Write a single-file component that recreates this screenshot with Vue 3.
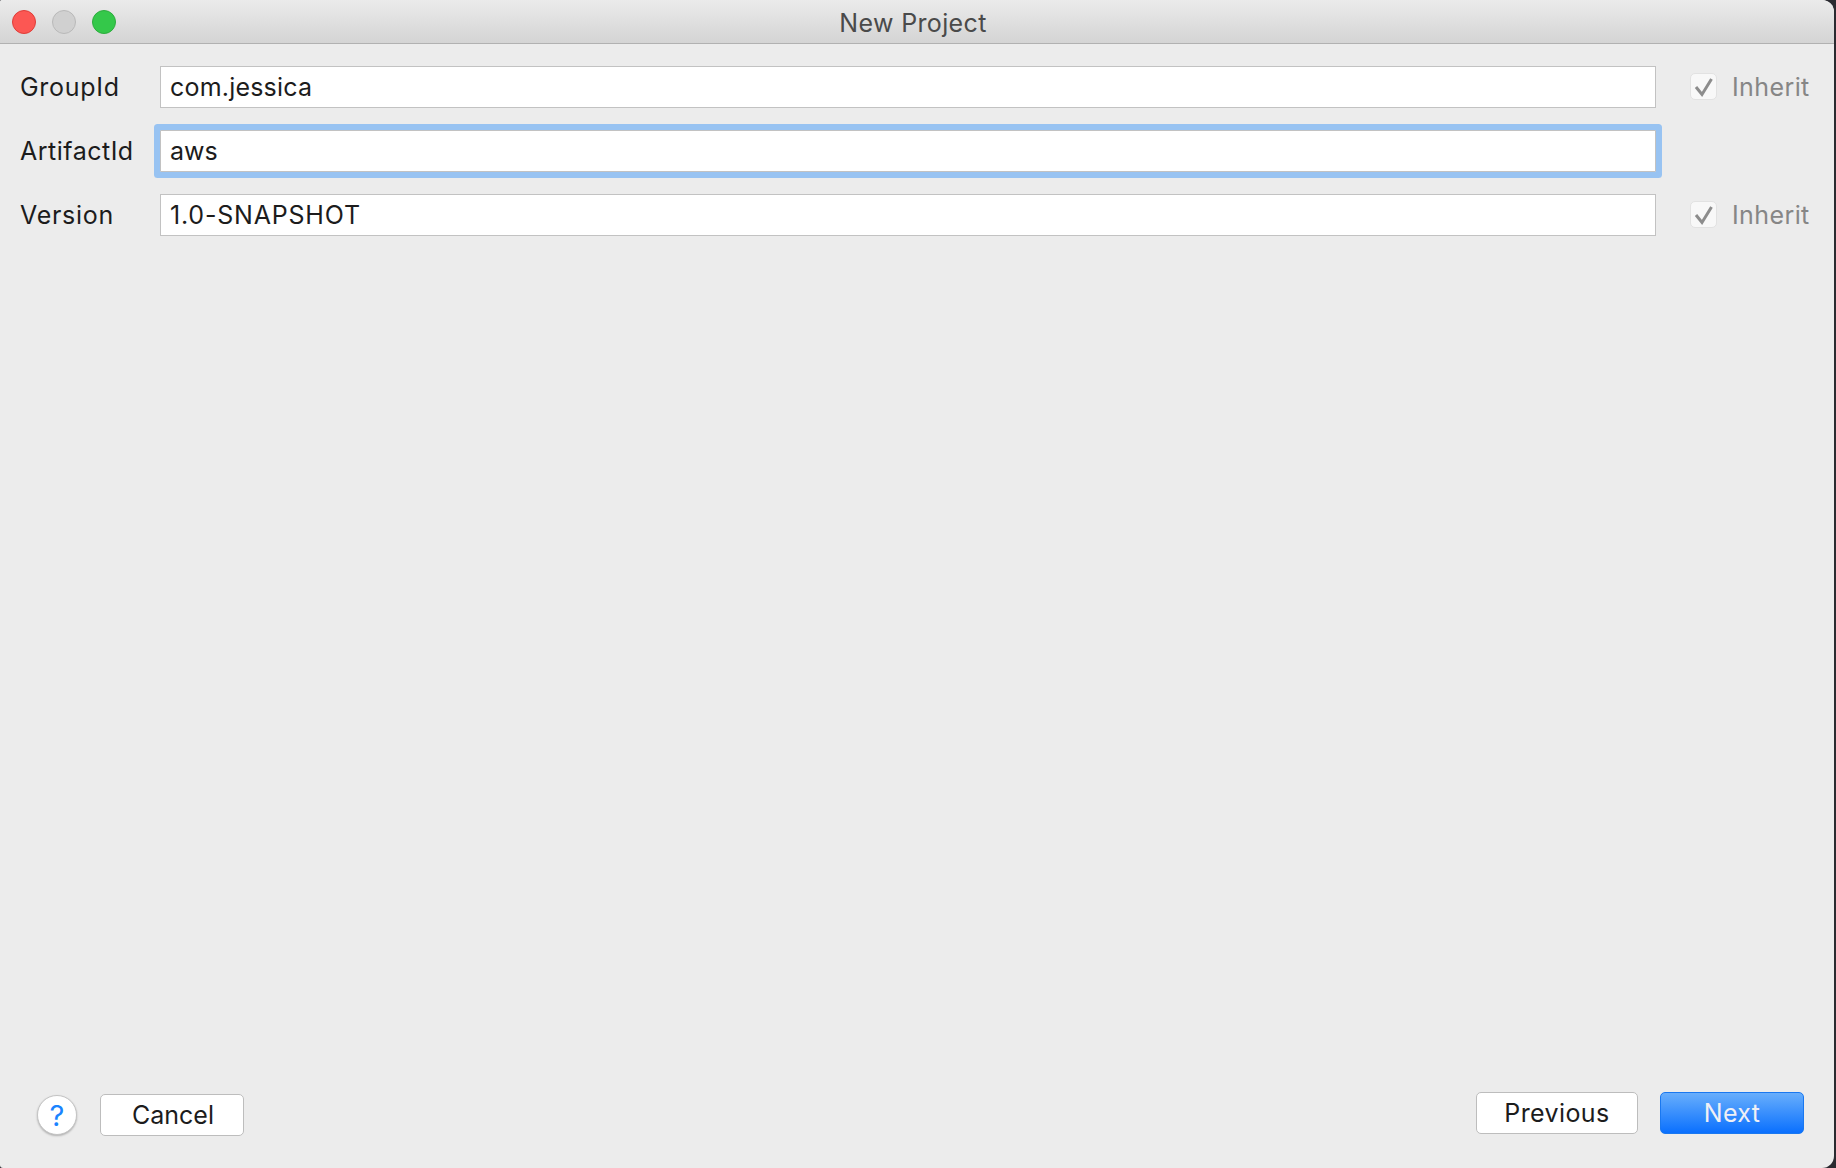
<script setup>
const rows = [
  { label: 'GroupId', value: 'com.jessica', inherit: true, cls: 'v-group', labelCls: '' },
  { label: 'ArtifactId', value: 'aws', inherit: false, focus: true, cls: 'v-artifact', labelCls: 'tight' },
  { label: 'Version', value: '1.0-SNAPSHOT', inherit: true, cls: 'v-version', labelCls: '' },
]
</script>

<template>
  <div class="screen">
    <div class="window">
      <header class="titlebar">
        <div class="lights">
          <span class="light red"></span>
          <span class="light gray"></span>
          <span class="light green"></span>
        </div>
        <div class="title">New Project</div>
      </header>
      <main class="form">
        <div v-for="r in rows" :key="r.label" class="row">
          <label class="label" :class="r.labelCls">{{ r.label }}</label>
          <div class="input" :class="[r.cls, { focus: r.focus }]">{{ r.value }}</div>
          <div class="inherit">
            <template v-if="r.inherit">
              <span class="check">
                <svg width="27" height="27" viewBox="0 0 27 27">
                  <path d="M6 14 L12 21.5 L21.5 6" fill="none" stroke="#8c8c8c" stroke-width="3" />
                </svg>
              </span>
              <span class="inherit-text">Inherit</span>
            </template>
          </div>
        </div>
      </main>
      <footer class="footer">
        <div class="left">
          <button class="help">?</button>
          <button class="btn cancel">Cancel</button>
        </div>
        <div class="right">
          <button class="btn prev">Previous</button>
          <button class="btn next">Next</button>
        </div>
      </footer>
    </div>
  </div>
</template>

<style>
html, body { margin: 0; background: #000; }
</style>

<style scoped>
.screen {
  width: 1836px;
  height: 1168px;
  background: #2a2a30;
  font-family: Inter, "Liberation Sans", sans-serif;
  overflow: hidden;
}
.window {
  width: 1834px;
  height: 1168px;
  background: #ececec;
  border-radius: 2px 12px 12px 3px;
  display: flex;
  flex-direction: column;
  overflow: hidden;
}
.titlebar {
  height: 43px;
  flex: none;
  position: relative;
  background: linear-gradient(#ebebeb, #d4d4d4);
  border-bottom: 1px solid #b1b1b1;
  display: flex;
  align-items: center;
  justify-content: center;
}
.lights {
  position: absolute;
  left: 12px;
  top: 10px;
  display: flex;
  gap: 16px;
}
.light {
  width: 24px;
  height: 24px;
  border-radius: 50%;
  box-sizing: border-box;
}
.red { background: #fc5753; border: 1px solid #df3d38; }
.gray { background: #d0d0d0; border: 1px solid #b9b9b9; }
.green { background: #34c84a; border: 1px solid #2dac3e; }
.title {
  font-size: 25px;
  letter-spacing: 0.35px;
  color: #4a4a4a;
  padding: 2px 8px 0 0;
}
.form {
  flex: 1;
  padding: 22px 0 0 20px;
  display: flex;
  flex-direction: column;
  gap: 22px;
}
.row {
  display: flex;
  align-items: center;
  height: 42px;
}
.label {
  width: 140px;
  font-size: 25px;
  letter-spacing: 0.7px;
  color: #1c1c1c;
}
.label.tight { letter-spacing: 0.5px; }
.input {
  width: 1496px;
  height: 42px;
  box-sizing: border-box;
  background: #fff;
  border: 1.5px solid #c2c2c2;
  padding-left: 9px;
  font-size: 25px;
  line-height: 41px;
  color: #1c1c1c;
}
.v-group { letter-spacing: 0.2px; }
.v-artifact { letter-spacing: 0; }
.v-version { letter-spacing: 0.8px; }
.input.focus {
  box-shadow: 0 0 0 6px #98c3f2;
  border-radius: 1px;
}
.inherit {
  display: flex;
  align-items: center;
  margin-left: 34px;
}
.check {
  width: 27px;
  height: 27px;
  margin-bottom: 2px;
  box-sizing: border-box;
  background: #f8f8f8;
  border: 1px solid #e2e2e2;
  border-radius: 5px;
  display: flex;
  align-items: center;
  justify-content: center;
}
.check svg {
  flex: none;
}
.inherit-text {
  margin-left: 15px;
  font-size: 25px;
  letter-spacing: 0.4px;
  color: #868686;
}
.footer {
  height: 76px;
  flex: none;
  display: flex;
  justify-content: space-between;
  padding: 0 30px 0 37px;
}
.left, .right {
  display: flex;
  align-items: flex-start;
}
.left { padding-top: 2px; gap: 23px; }
.right { gap: 22px; }
.help {
  width: 40px;
  height: 40px;
  margin-top: 1px;
  border-radius: 50%;
  background: #fff;
  border: 1px solid #c4c4c4;
  box-shadow: 0 1px 2px rgba(0,0,0,.25);
  color: #1a84ff;
  font-family: inherit;
  font-size: 29px;
  font-weight: 400;
  padding: 0;
}
.btn {
  height: 42px;
  box-sizing: border-box;
  border-radius: 5px;
  background: #fff;
  border: 1px solid #bdbdbd;
  font-family: inherit;
  font-size: 25px;
  color: #1c1c1c;
  padding: 0;
}
.cancel { width: 144px; padding-left: 2px; }
.prev { width: 162px; letter-spacing: 0.4px; }
.next {
  width: 144px;
  border: 1px solid #1a78f0;
  background: linear-gradient(#68aefc, #0a70fe);
  color: #f0f0f5;
  letter-spacing: 0.3px;
}
</style>
